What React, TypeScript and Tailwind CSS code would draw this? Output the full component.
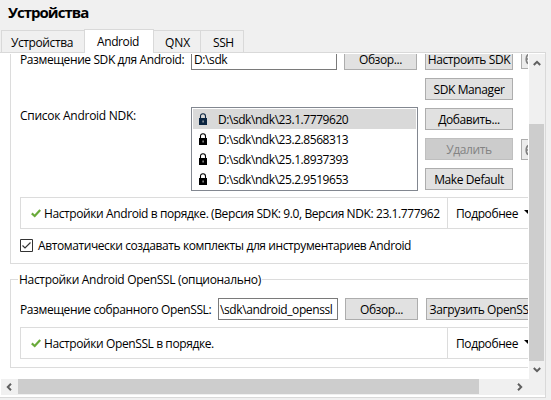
import type { ReactNode } from 'react';

function Button({ children, className = '', disabled = false }: { children?: ReactNode; className?: string; disabled?: boolean }) {
  const tone = disabled ? 'border-[#bfbfbf] bg-[#cccccc] text-[#838383]' : 'border-[#adadad] bg-[#e1e1e1]';
  return (
    <div className={`flex h-[22px] shrink-0 items-center justify-center border pt-[2px] whitespace-nowrap ${tone} ${className}`}>
      {children}
    </div>
  );
}

function ResetButton({ className = '' }: { className?: string }) {
  return (
    <div className={`flex h-[21px] w-6 shrink-0 items-center border border-[#adadad] bg-[#ececec] pl-[3px] ${className}`}>
      <svg width="12" height="12" viewBox="0 0 12 12" fill="none">
        <path d="M5 1C2.6 1.2 1.2 3.4 1.2 6.2S2.8 11 5.5 11 10 9 10 6.5" stroke="#808080" strokeWidth="1.6" />
        <path d="M2 6h5" stroke="#808080" strokeWidth="1.4" />
      </svg>
    </div>
  );
}

function Lock({ color }: { color: string }) {
  return (
    <svg width="8" height="12" viewBox="0 0 8 12" fill="none" className="mr-[11px] shrink-0">
      <path d="M1.5 6V3.2C1.5 1.6 2.5.7 4 .7s2.5.9 2.5 2.5V6" stroke={color} strokeWidth="1.1" />
      <path d="M0 5h8v7H0z" fill={color} />
      <path d="M3.5 7.5h1.2v2H3.5z" fill="#bbb" />
    </svg>
  );
}

function Status({ text }: { text: string }) {
  return (
    <div className="flex h-8 w-[560px] shrink-0 border border-[#dcdcdc]">
      <div className="flex w-[427px] shrink-0 items-center border-r border-[#dcdcdc] pl-[10px]">
        <svg width="10" height="9" viewBox="0 0 10 9" fill="none" className="mr-[3px] shrink-0">
          <path d="M.8 4.4 3.7 7 9.2 1" stroke="#6aaa3a" strokeWidth="2.2" />
        </svg>
        <span className="pt-[2px] whitespace-nowrap">{text}</span>
      </div>
      <span className="flex items-center pt-[2px] pl-[8px]">Подробнее</span>
      <svg width="8" height="5" viewBox="0 0 8 5" className="mt-[12px] ml-[6px] shrink-0">
        <path d="M0 0h8L4 4z" fill="#000" />
      </svg>
    </div>
  );
}

function Chevron({ className = '' }: { className?: string }) {
  return (
    <svg width="8" height="6" viewBox="0 0 8 6" fill="none" className={className}>
      <path d="M.8 5 4 1.8 7.2 5" stroke="#606060" strokeWidth="2" />
    </svg>
  );
}

const kits = ['23.1.7779620', '23.2.8568313', '25.1.8937393', '25.2.9519653'];

export default function App() {
  return (
    <div className="flex h-[400px] w-[551px] flex-col overflow-hidden bg-[#f0f0f0] font-['Open_Sans','Noto_Sans',sans-serif] text-[12px] leading-4 tracking-[-0.4px] text-black">
      <h1 className="h-[29px] shrink-0 pt-[2px] pl-2 text-[15px] leading-5 font-bold tracking-[-0.98px]">Устройства</h1>

      <div className="z-10 -mb-px flex h-6 shrink-0 items-end pl-px">
        <div className="mb-px flex h-[22px] w-[83px] items-center border border-r-0 border-b-0 border-[#d9d9d9] pt-[2px] pl-[9px]">Устройства</div>
        <div className="flex h-6 w-[70px] items-center justify-center border border-b-0 border-[#d9d9d9] bg-white pt-px pr-[2px]">Android</div>
        <div className="mb-px flex h-[22px] w-[47px] items-center border-t border-r border-[#d9d9d9] pt-[2px] pl-[11px] tracking-[-0.1px]">QNX</div>
        <div className="mb-px flex h-[22px] w-[43px] items-center border-t border-r border-[#d9d9d9] pt-[2px] pl-[12px]">SSH</div>
      </div>

      <div className="flex h-[346px] w-[546px] shrink-0 flex-col border-t border-r border-b border-[#d9d9d9] bg-white pt-px pl-px">
        <div className="flex h-[325px] shrink-0">
          <div className="flex w-[527px] shrink-0 flex-col overflow-hidden pl-[9px]">
            <div className="flex h-[210px] w-[620px] shrink-0 flex-col border-b border-l border-[#dcdcdc] pl-[9px]">
              <div className="-mt-[6px] flex h-[22px] shrink-0 items-center">
                <div className="w-[171px] shrink-0 pt-[2px]">Размещение SDK для Android:</div>
                <div className="flex h-[22px] w-[146px] shrink-0 items-center border border-[#7a7a7a] pt-[2px] pl-[2px]">D:\sdk</div>
                <Button className="ml-[7px] w-[73px]">Обзор...</Button>
                <Button className="ml-[8px] w-[88px]">Настроить SDK</Button>
                <ResetButton className="-mt-px ml-[8px]" />
              </div>
              <div className="mt-2 flex h-[113px] shrink-0">
                <div className="w-[171px] shrink-0 pt-[30px] tracking-[-0.27px]">Список Android NDK:</div>
                <div className="mt-[29px] h-[84px] w-[227px] shrink-0 border border-[#828790] p-px">
                  {kits.map((k, i) => (
                    <div key={k} className={`flex h-5 items-center pl-[6px] tracking-[-0.44px] ${i === 0 ? 'bg-[#d9d9d9]' : ''}`}>
                      <Lock color={i === 0 ? '#0a2440' : '#000'} />
                      <span className="pt-[2px]">D:\sdk\ndk\{k}</span>
                    </div>
                  ))}
                </div>
                <div className="ml-[7px] flex w-[88px] shrink-0 flex-col gap-2">
                  <Button>SDK Manager</Button>
                  <Button>Добавить...</Button>
                  <Button disabled>Удалить</Button>
                  <Button>Make Default</Button>
                </div>
                <ResetButton className="mt-[61px] ml-[8px]" />
              </div>
              <div className="mt-[6px] flex">
                <Status text="Настройки Android в порядке. (Версия SDK: 9.0, Версия NDK: 23.1.777962" />
              </div>
              <div className="mt-[8px] flex h-4 items-center">
                <svg width="13" height="13" viewBox="0 0 13 13" fill="none" className="mr-[5px]">
                  <path d="M.5.5h12v12H.5z" stroke="#333" />
                  <path d="M2.5 6.5 5 9l5.5-5.5" stroke="#333" strokeWidth="1.2" />
                </svg>
                <span className="pt-[2px]">Автоматически создавать комплекты для инструментариев Android</span>
              </div>
            </div>

            <fieldset className="mt-[7px] flex h-[97px] w-[620px] shrink-0 flex-col border border-[#dcdcdc] pl-[9px]">
              <legend className="-ml-[2px] h-4 px-px pt-px tracking-[-0.32px]">Настройки Android OpenSSL (опционально)</legend>
              <div className="mt-[11px] flex h-[22px] shrink-0 items-center">
                <div className="w-[198px] shrink-0 pt-[2px]">Размещение собранного OpenSSL:</div>
                <div className="flex h-[22px] w-[120px] shrink-0 items-center border border-[#7a7a7a] pt-[2px] pl-px">\sdk\android_openssl</div>
                <Button className="ml-[7px] w-[73px]">Обзор...</Button>
                <Button className="ml-[8px] w-[112px]">Загрузить OpenSSL</Button>
              </div>
              <div className="mt-[7px] flex">
                <Status text="Настройки OpenSSL в порядке." />
              </div>
            </fieldset>
          </div>
          <div className="ml-[1px] flex w-[16px] shrink-0 flex-col items-center bg-[#f0f0f0]">
            <Chevron className="mt-[6px] mb-[58px] shrink-0" />
            <div className="h-[237px] w-[15px] shrink-0 self-start bg-[#cdcdcd]" />
            <Chevron className="mt-[6px] shrink-0 rotate-180" />
          </div>
        </div>
        <div className="flex h-4 shrink-0 items-center bg-[#f0f0f0]">
          <Chevron className="mx-[4px] shrink-0 -rotate-90" />
          <div className="ml-px h-[15px] w-[461px] self-start bg-[#cdcdcd]" />
          <Chevron className="ml-[37px] shrink-0 rotate-90" />
        </div>
      </div>
    </div>
  );
}
